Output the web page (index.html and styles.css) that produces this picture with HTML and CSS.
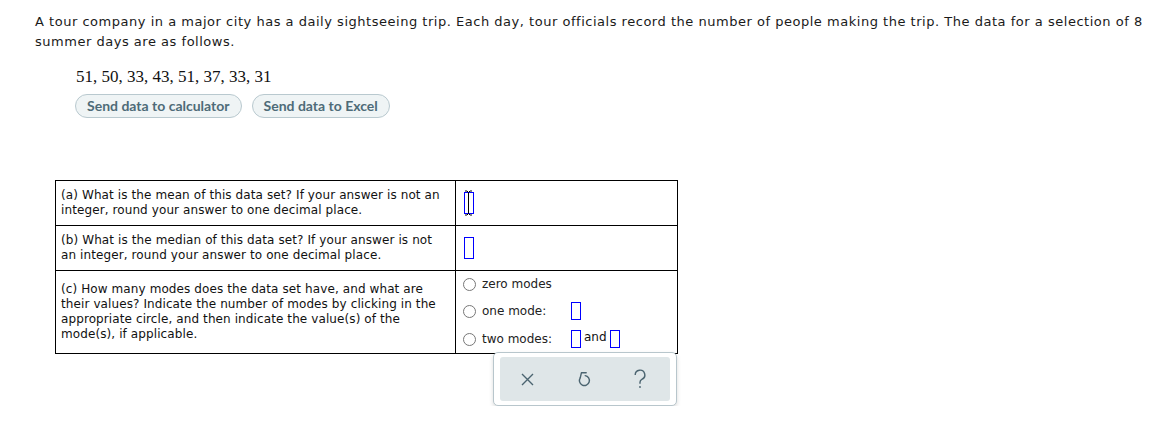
FILE: index.html
```html
<!DOCTYPE html>
<html>
<head>
<meta charset="utf-8">
<link rel="stylesheet" href="styles.css">
</head>
<body>
<div class="page">
  <p class="intro">A tour company in a major city has a daily sightseeing trip. Each day, tour officials record the number of people making the trip. The data for a selection of 8 summer days are as follows.</p>
  <div class="data">51, 50, 33, 43, 51, 37, 33, 31</div>
  <div class="btns">
    <button class="pill">Send data to calculator</button>
    <button class="pill">Send data to Excel</button>
  </div>
  <table class="qs">
    <tr class="r1">
      <td class="q">(a) What is the mean of this data set? If your answer is not an integer, round your answer to one decimal place.</td>
      <td class="a"><span class="box cur"><svg class="ibeam" width="9" height="26" viewBox="0 0 9 26"><path d="M1 1h2l1.5 1.5L6 1h2M4.5 2.5v21M1 25h2l1.5-1.5L6 25h2" fill="none" stroke="#000" stroke-width="1"/></svg></span></td>
    </tr>
    <tr class="r2">
      <td class="q">(b) What is the median of this data set? If your answer is not an integer, round your answer to one decimal place.</td>
      <td class="a"><span class="box"></span></td>
    </tr>
    <tr class="r3">
      <td class="q">(c) How many modes does the data set have, and what are their values? Indicate the number of modes by clicking in the appropriate circle, and then indicate the value(s) of the mode(s), if applicable.</td>
      <td class="a modes">
        <div class="opt first"><span class="radio"></span><span class="lbl">zero modes</span></div>
        <div class="opt"><span class="radio"></span><span class="lbl w">one mode:</span><span class="box sm"></span></div>
        <div class="opt"><span class="radio"></span><span class="lbl w">two modes:</span><span class="box sm"></span><span class="and">and</span><span class="box sm"></span></div>
      </td>
    </tr>
  </table>
  <div class="toolwrap">
    <div class="tools">
      <div class="tools-in">
        <svg width="13" height="13" viewBox="0 0 13 13"><path d="M1 1l11 11M12 1L1 12" stroke="#4b6470" stroke-width="1.4" fill="none"/></svg>
        <svg width="14" height="17" viewBox="0 0 14 17"><path d="M3.2 6.8A5 5 0 1 0 8.2 4.6" fill="none" stroke="#4b6470" stroke-width="1.4" stroke-linecap="round"/><path d="M9.2 1.8H4.4L3.3 6.6" fill="none" stroke="#4b6470" stroke-width="1.4" stroke-linejoin="round" stroke-linecap="round"/></svg>
        <svg width="12" height="20" viewBox="0 0 12 20"><path d="M1.2 6A4.8 4.8 0 1 1 7.8 10.4C6.5 11 6 11.8 6 13.3v1.5" fill="none" stroke="#4b6470" stroke-width="1.4"/><circle cx="6" cy="18" r="0.9" fill="#4b6470"/></svg>
      </div>
    </div>
  </div>
</div>
</body>
</html>
```
FILE: styles.css
```css
html, body { margin: 0; padding: 0; background: #fff; }
.page { padding: 12px 0 0 35px; font-family: "DejaVu Sans", Verdana, sans-serif; color: #1a1a1a; }
.intro { margin: 0; font-size: 13px; line-height: 20px; width: 1115px; letter-spacing: 0.52px; }
.data { margin: 15px 0 0 41px; font-family: "Liberation Serif", "Times New Roman", serif; font-size: 17px; color: #111; line-height: 20px; }
.btns { display: flex; gap: 10px; margin: 7px 0 0 40px; }
.pill { font-family: Lato, "Open Sans", sans-serif; font-weight: 700; font-size: 14px; color: #4e6b78; background: #eff4f5; border: 1px solid #b9c9cf; border-radius: 12px; height: 24px; padding: 0 11px; line-height: 22px; }
.qs { border-collapse: collapse; margin: 62px 0 0 20px; width: 623px; font-size: 12px; color: #111; }
.qs td { border: 1px solid #000; vertical-align: middle; }
.q { width: 388px; padding: 2px 6px 2px 5px; line-height: 15px; letter-spacing: 0.1px; }
.a { padding: 0 8px; }
.r1 td, .r2 td { height: 40px; }
.r3 td { height: 78px; }
.box { display: inline-block; width: 8px; height: 20px; border: 1px solid #0000ff; vertical-align: middle; position: relative; }
.box.sm { width: 8px; height: 16px; }
.cur .ibeam { position: absolute; left: -1px; top: -3px; }
.modes { padding: 0 8px 0 7px; }
.opt { display: flex; align-items: center; height: 28px; }
.opt.first { height: 26px; }
.radio { width: 11px; height: 11px; border: 1px solid #777; border-radius: 50%; margin-right: 6px; }
.lbl { font-size: 12px; color: #222; }
.lbl.w { width: 89px; }
.and { margin: -4px 3px 0 3px; }
.toolwrap { margin: -2px 0 0 458px; }
.tools { width: 184px; height: 54px; box-sizing: border-box; border: 1px solid #b8c6cc; border-radius: 5px; background: #fff; box-shadow: 0 2px 4px rgba(0,0,0,0.15); padding: 4px 6px; }
.tools-in { height: 100%; background: #dfe6e8; border-radius: 3px; display: flex; align-items: center; justify-content: space-between; padding: 0 24px 0 21px; }
```
